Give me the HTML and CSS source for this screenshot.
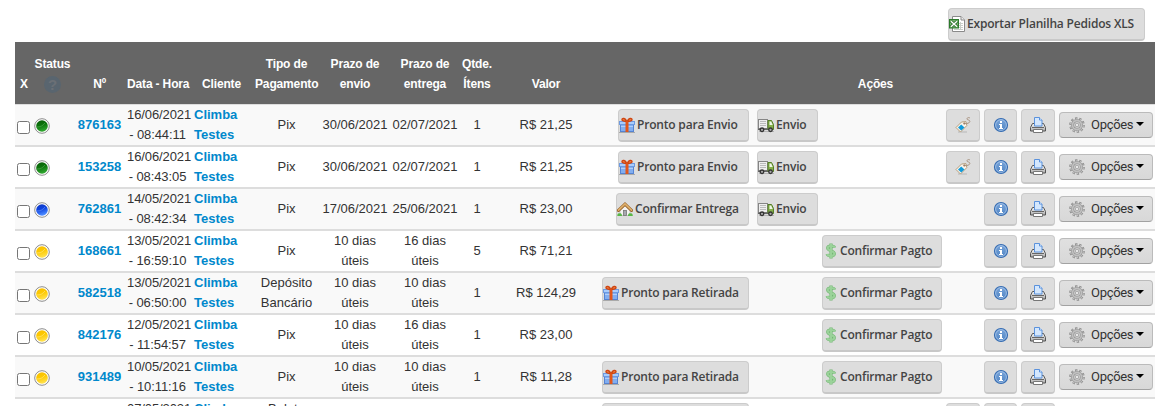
FILE: index.html
```html
<!DOCTYPE html>
<html lang="pt-br">
<head>
    <meta charset="UTF-8">
    <title>Pedidos</title>
    <link rel="stylesheet" href="styles.css">
</head>
<body>
<svg class="sprite">
    <defs>
        <linearGradient id="gGreen" x1="0" y1="0" x2="0.3" y2="1"><stop offset="0" stop-color="#0a5c0a"/><stop offset="0.5" stop-color="#0b740b"/><stop offset="1" stop-color="#2fa52f"/></linearGradient>
        <linearGradient id="gBlue" x1="0" y1="0" x2="0.3" y2="1"><stop offset="0" stop-color="#1237bd"/><stop offset="0.5" stop-color="#0d43e0"/><stop offset="1" stop-color="#4d8bff"/></linearGradient>
        <linearGradient id="gYellow" x1="0" y1="0" x2="0.3" y2="1"><stop offset="0" stop-color="#f7bf08"/><stop offset="0.5" stop-color="#fdc900"/><stop offset="1" stop-color="#ffe04a"/></linearGradient>
        <linearGradient id="gInfo" x1="0" y1="0" x2="0" y2="1"><stop offset="0" stop-color="#7ba6da"/><stop offset="1" stop-color="#4f84c4"/></linearGradient>
        <linearGradient id="gMetal" x1="0" y1="0" x2="0" y2="1"><stop offset="0" stop-color="#fafafa"/><stop offset="1" stop-color="#a8a8a8"/></linearGradient>
    </defs>
    <symbol id="i-gift" viewBox="0 0 16 16">
        <path d="M0 15.500h16" stroke="#a9a9a9"/>
        <rect x="1.500" y="7.500" width="13" height="7" fill="#82aef0" stroke="#5583d2"/>
        <rect x="0.500" y="4.500" width="15" height="3" fill="#a9ccfb" stroke="#6c9ae2"/>
        <path d="M2 9.500h12" stroke="#b0cffa"/>
        <rect x="6.500" y="4" width="3" height="11" fill="#e2571a"/>
        <path d="M7.500 4C5 4.600 2.800 3.800 3 2.300S6.500 1.200 7.500 4M8.500 4C11 4.600 13.200 3.800 13 2.300S9.500 1.200 8.500 4" fill="#f08c50" stroke="#cf4410" stroke-width="1.400"/>
    </symbol>
    <symbol id="i-truck" viewBox="0 0 16 16">
        <path d="M1 14.500h15" stroke="#b5b5b5"/>
        <rect x="0.500" y="2.500" width="9" height="9" fill="#eee" stroke="#858585"/>
        <path d="M2 4.500h6M2 6.500h6M2 8.500h6" stroke="#bbb"/>
        <path d="M0 11.500h10v1.500H0z" fill="#666"/>
        <path d="M10 3.500h3.500l2 4v5H10z" fill="#86b04c" stroke="#547e25"/>
        <path d="M11.500 4.500h1.700l1.500 3.500h-3.200z" fill="#eef6e8"/>
        <circle cx="4" cy="12.800" r="1.800" fill="#aaa" stroke="#333" stroke-width="1.300"/>
        <circle cx="12.500" cy="12.800" r="1.800" fill="#aaa" stroke="#333" stroke-width="1.300"/>
    </symbol>
    <symbol id="i-house" viewBox="0 0 16 16">
        <path d="M3 8l5-5 5 5v6.500H3z" fill="#f4f4f2" stroke="#aaa" stroke-width=".6"/>
        <rect x="6.500" y="9.500" width="3" height="5" fill="#a7a7b0" stroke="#777" stroke-width=".8"/>
        <path d="M1.500 9.300L8 3.200l6.500 6.100" fill="none" stroke="#98632c" stroke-width="3.200" stroke-linecap="round"/>
        <path d="M1.500 9.100L8 3l6.500 6.100" fill="none" stroke="#deb06c" stroke-width="1.700" stroke-linecap="round"/>
        <path d="M.3 15c0-2 1-3 2.200-2.500C4 12 5 13 5 15zM11 15c0-2 1-3 2.300-2.500 1.500-.5 2.500.5 2.500 2.500z" fill="#58b746"/>
    </symbol>
    <symbol id="i-dollar" viewBox="0 0 12 16">
        <path d="M6 .5v15M9.500 4.600C9 2.700 3 2.200 2.700 4.900 2.500 8 9.500 7.500 9.300 10.800 9 13.800 2.700 13.200 2.200 11" fill="none" stroke="#76b876" stroke-width="3.200"/>
        <path d="M6 1v14M9.500 4.600C9 2.700 3 2.200 2.700 4.900 2.500 8 9.500 7.500 9.300 10.800 9 13.800 2.700 13.200 2.200 11" fill="none" stroke="#9bd29a" stroke-width="2"/>
    </symbol>
    <symbol id="i-tag" viewBox="0 0 16 16">
        <path d="M3 15h9" stroke="#c2c2c2" stroke-width="1.400"/>
        <path d="M1 10.500L6.500 5l4.500-.4.800 4L5.500 15z" fill="#fbf5ec" stroke="#b79f7e"/>
        <path d="M3 10.500l3.200-3 3.300 3-3.300 3z" fill="#119bdc"/>
        <circle cx="9.300" cy="6.500" r="1" fill="#8a6a50"/>
        <path d="M9.500 6.500c2 .5 5.500-.4 5.400-2.200S11.600 3.200 12 1.700 14 .5 15 1" fill="none" stroke="#ab9684"/>
    </symbol>
    <symbol id="i-info" viewBox="0 0 16 16">
        <circle cx="8" cy="8" r="6.500" fill="url(#gInfo)" stroke="#376db2" stroke-width="1.200"/>
        <circle cx="8" cy="8" r="5.400" fill="none" stroke="#a9c6ea" stroke-width=".8"/>
        <path d="M7 4h2v2H7zM6 7h3v4h1v1H6v-1h1V8H6z" fill="#fff"/>
    </symbol>
    <symbol id="i-print" viewBox="0 0 16 16">
        <path d="M2.500 6.500h11l2 4v3.500h-15v-3.500z" fill="url(#gMetal)" stroke="#555"/>
        <path d="M4.500 9v-8.500h5l2.500 2.500v6z" fill="#d4e7fd" stroke="#5b92dc"/>
        <path d="M9.500.5V3H12" fill="#fff" stroke="#5b92dc"/>
        <path d="M2 10.500h12" stroke="#666"/>
        <path d="M3.500 12.500h9v3h-9z" fill="#fff" stroke="#777"/>
    </symbol>
    <symbol id="i-gear" viewBox="0 0 16 16">
        <circle cx="8" cy="8" r="6.600" fill="none" stroke="#8c8c8c" stroke-width="2.400" stroke-dasharray="2.300 1.846"/>
        <circle cx="8" cy="8" r="4.500" fill="#d4d4d4" stroke="#929292" stroke-width="3"/>
        <circle cx="8" cy="8" r="4.500" fill="none" stroke="#c0c0c0" stroke-width="1.800"/>
        <circle cx="8" cy="8" r="6.400" fill="none" stroke="#c0c0c0" stroke-width="1.400" stroke-dasharray="1.300 2.721" stroke-dashoffset="-.5"/>
        <circle cx="8" cy="8" r="1.800" fill="#e6e6e6" stroke="#999" stroke-width=".8"/>
    </symbol>
    <symbol id="i-xls" viewBox="0 0 16 16">
        <path d="M3.500.5h8.500l3.500 3.500v11.500h-12z" fill="#fff" stroke="#8a8a8a"/>
        <path d="M12 .5V4h3.500" fill="#eee" stroke="#8a8a8a"/>
        <path d="M9 7.500h5M9 9.500h5M9 11.500h5M5 13.500h9M11.500 6v8" stroke="#c9cec9"/>
        <rect x=".5" y="3.500" width="9" height="8.500" fill="#6faf69" stroke="#2c7a2c"/>
        <path d="M2 5.200l6 5.500M8 5.200l-6 5.500" stroke="#1c5f1c" stroke-width="2.800"/>
        <path d="M2 5.200l6 5.500M8 5.200l-6 5.500" stroke="#fff" stroke-width="1.500"/>
    </symbol>
    <symbol id="s-green" viewBox="0 0 16 16"><circle cx="8" cy="8" r="7.300" fill="#fff" stroke="#8c8c8c"/><circle cx="8" cy="8" r="5.800" fill="url(#gGreen)"/><path d="M2.500 9c4 0 6-1 8.500-4" fill="none" stroke="#4ba44b" stroke-width=".7"/></symbol>
    <symbol id="s-blue" viewBox="0 0 16 16"><circle cx="8" cy="8" r="7.300" fill="#fff" stroke="#8c8c8c"/><circle cx="8" cy="8" r="5.800" fill="url(#gBlue)"/><path d="M2.500 9c4 0 6-1 8.500-4" fill="none" stroke="#5c8bf4" stroke-width=".7"/></symbol>
    <symbol id="s-yellow" viewBox="0 0 16 16"><circle cx="8" cy="8" r="7.300" fill="#fff" stroke="#8c8c8c"/><circle cx="8" cy="8" r="5.800" fill="url(#gYellow)"/><path d="M2.500 9c4 0 6-1 8.500-4" fill="none" stroke="#ffe677" stroke-width=".7"/></symbol>
</svg>

<div class="topo">
    <a class="botao exportar"><svg class="ico"><use href="#i-xls"/></svg>Exportar Planilha Pedidos XLS</a>
</div>

<table class="pedidos">
    <colgroup>
        <col class="c-x"><col class="c-status"><col class="c-num"><col class="c-data"><col class="c-cliente"><col class="c-tipo">
        <col class="c-envio"><col class="c-entrega"><col class="c-qtde"><col class="c-valor"><col class="c-acoes">
    </colgroup>
    <thead>
        <tr>
            <th>X</th>
            <th>Status<br><span class="ajuda">?</span></th>
            <th>Nº</th>
            <th>Data - Hora</th>
            <th>Cliente</th>
            <th>Tipo de<br>Pagamento</th>
            <th>Prazo de<br>envio</th>
            <th>Prazo de<br>entrega</th>
            <th>Qtde.<br>Ítens</th>
            <th>Valor</th>
            <th>Ações</th>
        </tr>
    </thead>
    <tbody id="lista"></tbody>
</table>

<script>
    // status, numero, data, hora, pagamento, envio, entrega, itens, valor, acao principal, envio?, pagto?, etiqueta?
    var pedidos = [
        ['green', '876163', '16/06/2021', '08:44:11', 'Pix', '30/06/2021', '02/07/2021', 1, '21,25', 'Envio', 1, 0, 1],
        ['green', '153258', '16/06/2021', '08:43:05', 'Pix', '30/06/2021', '02/07/2021', 1, '21,25', 'Envio', 1, 0, 1],
        ['blue', '762861', '14/05/2021', '08:42:34', 'Pix', '17/06/2021', '25/06/2021', 1, '23,00', 'Entrega', 1, 0, 0],
        ['yellow', '168661', '13/05/2021', '16:59:10', 'Pix', '10 dias<br>úteis', '16 dias<br>úteis', 5, '71,21', '', 0, 1, 0],
        ['yellow', '582518', '13/05/2021', '06:50:00', 'Depósito<br>Bancário', '10 dias<br>úteis', '10 dias<br>úteis', 1, '124,29', 'Retirada', 0, 1, 0],
        ['yellow', '842176', '12/05/2021', '11:54:57', 'Pix', '10 dias<br>úteis', '16 dias<br>úteis', 1, '23,00', '', 0, 1, 0],
        ['yellow', '931489', '10/05/2021', '10:11:16', 'Pix', '10 dias<br>úteis', '10 dias<br>úteis', 1, '11,28', 'Retirada', 0, 1, 0],
        ['green', '', '07/05/2021', '', 'Boleto<br>&nbsp;', '', '', '', '', 'Retirada', 0, 0, 1]
    ];
    // icone, texto e classe do primeiro botao
    var principal = {
        'Envio': ['gift', 'Pronto para Envio', 'b-pronto'],
        'Entrega': ['house', 'Confirmar Entrega', 'b-entrega'],
        'Retirada': ['gift', 'Pronto para Retirada', 'b-retirada']
    };

    function ico(nome, classe) {
        return '<svg class="ico ' + (classe || '') + '"><use href="#' + nome + '"/></svg>';
    }
    function botao(classe, icone, texto) {
        return '<a class="botao ' + classe + '">' + ico(icone) + texto + '</a>';
    }

    var html = '';
    for (var i = 0; i < pedidos.length; i++) {
        var p = pedidos[i];
        var b = principal[p[9]];
        html += '<tr>' +
            '<td class="marca"><input type="checkbox"></td>' +
            '<td class="status">' + ico('s-' + p[0]) + '</td>' +
            '<td><a class="link">' + p[1] + '</a></td>' +
            '<td class="data">' + p[2] + '<br>' + (p[3] ? '- ' + p[3] : '&nbsp;') + '</td>' +
            '<td class="cliente"><a class="link">Climba<br>Testes</a></td>' +
            '<td>' + p[4] + '</td><td>' + p[5] + '</td><td>' + p[6] + '</td><td>' + p[7] + '</td>' +
            '<td>' + (p[8] ? 'R$ ' + p[8] : '') + '</td>' +
            '<td><div class="acoes">' +
            '<div class="principal">' + (b ? botao(b[2], 'i-' + b[0], b[1]) : '') + '</div>' +
            '<div>' + (p[10] ? botao('b-envio', 'i-truck', 'Envio') : '') + '</div>' +
            '<div>' + (p[11] ? botao('b-pagto', 'i-dollar', 'Confirmar Pagto') : '') + '</div>' +
            '<div>' + (p[12] ? botao('b-ico', 'i-tag', '') : '') + '</div>' +
            '<div>' + botao('b-ico', 'i-info', '') + '</div>' +
            '<div>' + botao('b-ico', 'i-print', '') + '</div>' +
            '<a class="opcoes">' + ico('i-gear') + '<span>Opções</span><i class="seta"></i></a>' +
            '</div></td></tr>';
    }
    document.getElementById('lista').innerHTML = html;
</script>
</body>
</html>
```
FILE: styles.css
```css
html, body {
    margin: 0;
    height: 406px;
    overflow: hidden;
    background: #fff;
}
body {
    font-family: "Liberation Sans", Arial, sans-serif;
    font-size: 13px;
    line-height: 20px;
    color: #333;
}
.sprite {
    position: absolute;
    width: 0;
    height: 0;
}
.topo {
    display: flex;
    justify-content: flex-end;
    padding: 8px 22px 1px 0;
}

/* tabela */
.pedidos {
    width: 1140px;
    margin-left: 15px;
    table-layout: fixed;
    border-collapse: separate;
    border-spacing: 0;
}
.c-x { width: 18px; }
.c-status { width: 39px; }
.c-num { width: 55px; }
.c-data { width: 61px; }
.c-cliente { width: 67px; }
.c-tipo { width: 63px; }
.c-envio { width: 74px; }
.c-entrega { width: 66px; }
.c-qtde { width: 38px; }
.c-valor { width: 100px; }
.c-acoes { width: 559px; }
.pedidos th, .pedidos td {
    padding: 0;
    text-align: center;
    white-space: nowrap;
}
.pedidos th {
    height: 52px;
    padding-bottom: 10px;
    vertical-align: bottom;
    background: #666;
    color: #fff;
    font-size: 12px;
    letter-spacing: -0.15px;
    border-bottom: 1px solid #ddd;
}
.pedidos td {
    height: 40px;
    vertical-align: middle;
    border-bottom: 2px solid #ddd;
}
.pedidos tbody tr:nth-child(odd) td {
    background: #f9f9f9;
}
.pedidos td.data {
    letter-spacing: -0.1px;
}
.pedidos td.cliente {
    text-align: left;
    padding-left: 6px;
}
.ajuda {
    display: inline-block;
    width: 17px;
    height: 17px;
    line-height: 18px;
    border-radius: 50%;
    background: #59656f;
    color: #6b7076;
    font-size: 15px;
    vertical-align: middle;
}
.marca input {
    display: block;
    width: 13px;
    height: 13px;
    margin: 4px 0 0 2px;
}
.status .ico {
    margin: 2px 0 0 1px;
}
.link {
    color: #08c;
    font-weight: bold;
}
.ico {
    display: block;
    flex: none;
    width: 16px;
    height: 16px;
}

/* botoes */
.botao {
    box-sizing: border-box;
    display: flex;
    align-items: center;
    height: 33px;
    border: 1px solid #ccc;
    border-bottom: 2px solid #c8c8c8;
    border-radius: 4px;
    background: #ddd;
    color: #444;
    font-family: "Open Sans", sans-serif;
    font-size: 12px;
    font-weight: 600;
    letter-spacing: -0.19px;
    white-space: nowrap;
}
.botao .ico {
    margin-right: 2px;
}
.exportar { width: 197px; }
.b-pronto { width: 131px; }
.b-entrega { width: 133px; }
.b-retirada { width: 147px; }
.b-envio { width: 61px; }
.b-pagto .ico {
    width: 12px;
    margin: 0 3px 0 2px;
}
.b-ico {
    justify-content: center;
}
.b-ico .ico {
    margin: 0;
}
.acoes {
    display: grid;
    grid-template-columns: 157px 61px 120px 34px 33px 34px 94px;
    column-gap: 4px;
    align-items: center;
}
.principal {
    display: flex;
    justify-content: flex-end;
    padding-right: 4px;
}
.opcoes {
    box-sizing: border-box;
    display: flex;
    align-items: center;
    height: 26px;
    padding-left: 9px;
    border: 1px solid #bbb;
    border-bottom-color: #a2a2a2;
    border-radius: 4px;
    background: linear-gradient(#e0e0e0, #d8d8d8);
    font-family: Roboto, sans-serif;
    font-size: 13px;
    letter-spacing: -0.3px;
}
.opcoes span {
    margin-left: 6px;
}
.seta {
    margin-left: 3px;
    margin-bottom: 2px;
    border: 4px solid transparent;
    border-top-color: #000;
    border-bottom: 0;
}
```
